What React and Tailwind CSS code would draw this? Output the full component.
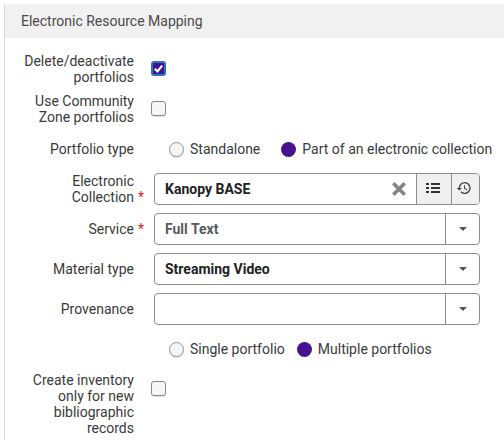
import React from "react";

function Label({ children, req }) {
  return (
    <div className="relative w-[129px] shrink-0 text-right text-[14px] leading-[16px] text-[#3a3a3a]">
      {children}
      {req && <span className="absolute bottom-0 left-[133px] text-[#e02020]">*</span>}
    </div>
  );
}

function Check({ checked }) {
  return checked ? (
    <div className="-mt-[1px] ml-[17px] flex h-[15px] w-[15px] items-center justify-center rounded-[3px] border-2 border-[#2f74b0] bg-[#3d1590]">
      <svg viewBox="0 0 12 12" className="h-[11px] w-[11px]">
        <path d="M2 6.2 L4.9 9.2 L10 2.8" fill="none" stroke="#fff" strokeWidth="2.4" />
      </svg>
    </div>
  ) : (
    <div className="-mt-[1px] ml-[17px] h-[15px] w-[15px] rounded-[3px] border border-[#8a8a8a] bg-[#f6f6f6] shadow-[0_1px_1px_rgba(0,0,0,0.15)]" />
  );
}

function Radio({ checked, label }) {
  return (
    <div className="flex items-center gap-[6px]">
      {checked ? (
        <div className="h-[15px] w-[15px] rounded-full bg-[#46148f]" />
      ) : (
        <div className="h-[15px] w-[15px] rounded-full border border-[#969696] bg-[#f5f5f5] shadow-[0_1px_1px_rgba(0,0,0,0.15)]" />
      )}
      <span className="text-[14px] leading-[16px] text-[#3a3a3a]">{label}</span>
    </div>
  );
}

function Select({ value, muted }) {
  return (
    <div className="ml-[20px] flex h-[32px] w-[326px] items-stretch rounded-[4px] border border-[#8c8c8c] bg-white">
      <div className={"flex flex-1 items-center pl-[10px] text-[14px] font-bold " + (muted ? "text-[#5a5a5a]" : "text-[#222222]")}>
        {value}
      </div>
      <div className="flex w-[34px] items-center justify-center border-l border-[#8c8c8c]">
        <div className="h-0 w-0 border-x-[4px] border-t-[4px] border-x-transparent border-t-[#555555]" />
      </div>
    </div>
  );
}

export default function App() {
  return (
    <div className="h-[440px] w-[504px] overflow-hidden bg-white pl-[4px] pt-[4px] font-['Roboto',sans-serif]">
      <div className="h-[436px] border-l border-[#d8d8d8]">
        <div className="flex h-[34px] items-center rounded-t-[4px] bg-[#f1f1f1] pl-[16px] text-[14px] text-[#4a4a4a]">
          Electronic Resource Mapping
        </div>

        <div className="mt-[15px] flex items-center">
          <Label>Delete/deactivate portfolios</Label>
          <Check checked />
        </div>
        <div className="mt-[8px] flex items-center">
          <Label>Use Community Zone portfolios</Label>
          <Check />
        </div>
        <div className="mt-[16px] flex h-[16px] items-center">
          <Label>Portfolio type</Label>
          <div className="ml-[20px] flex gap-[21px] pl-[15px]">
            <Radio label="Standalone" />
            <Radio checked label="Part of an electronic collection" />
          </div>
        </div>
        <div className="mt-[16px] flex h-[32px] items-center">
          <Label req>
            Electronic
            <br />
            Collection
          </Label>
          <div className="ml-[20px] flex h-[32px] w-[326px] items-stretch rounded-[4px] border border-[#8c8c8c] bg-white">
            <div className="flex flex-1 items-center pl-[10px] text-[14px] font-bold text-[#222222]">Kanopy BASE</div>
            <div className="flex w-[34px] items-center justify-center pb-[1px]">
              <svg viewBox="0 0 14 14" className="h-[16px] w-[16px]">
                <path d="M2 2 L12 12 M12 2 L2 12" stroke="#858585" strokeWidth="3.2" fill="none" />
              </svg>
            </div>
            <div className="flex w-[35px] items-center justify-center border-l border-[#8c8c8c] bg-[#f0f0f0] pb-[2px] pr-[3px]">
              <svg viewBox="0 0 14 10" className="h-[10px] w-[14px]">
                <path d="M5 1 H14 M5 5 H14 M5 9 H14" stroke="#333" strokeWidth="1.8" />
                <path d="M0 1 H3 M0 5 H3 M0 9 H3" stroke="#333" strokeWidth="2" />
              </svg>
            </div>
            <div className="flex w-[28px] items-center justify-center rounded-r-[3px] border-l border-[#8c8c8c] bg-[#f0f0f0] pb-[2px] pr-[3px]">
              <svg viewBox="0 0 24 24" className="h-[16px] w-[16px]">
                <path
                  fill="#444"
                  d="M13 3a9 9 0 0 0-9 9H1l3.9 3.9L9 12H6a7 7 0 1 1 2.05 4.95l-1.42 1.42A9 9 0 1 0 13 3zm-1 5v5l4.25 2.52.77-1.28-3.52-2.09V8z"
                />
              </svg>
            </div>
          </div>
        </div>
        <div className="mt-[8px] flex h-[32px] items-center">
          <Label req>Service</Label>
          <Select value="Full Text" muted />
        </div>
        <div className="mt-[8px] flex h-[32px] items-center">
          <Label>Material type</Label>
          <Select value="Streaming Video" />
        </div>
        <div className="mt-[8px] flex h-[32px] items-center">
          <Label>Provenance</Label>
          <Select value="" />
        </div>
        <div className="mt-[16px] flex h-[16px] items-center gap-[12px] pl-[164px]">
          <Radio label="Single portfolio" />
          <Radio checked label="Multiple portfolios" />
        </div>
        <div className="mt-[15px] flex items-center">
          <Label>Create inventory only for new bibliographic records</Label>
          <div className="-mt-[30px]">
            <Check />
          </div>
        </div>
      </div>
    </div>
  );
}
